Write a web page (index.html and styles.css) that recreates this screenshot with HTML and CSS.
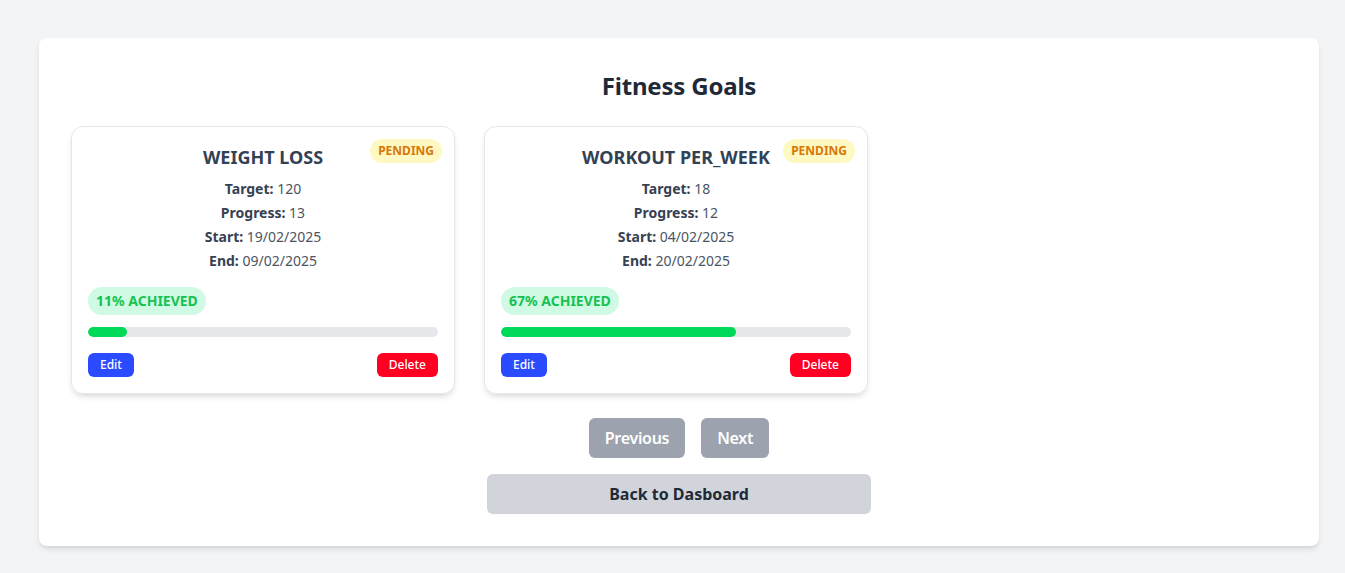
FILE: index.html
```html
<!DOCTYPE html>
<html lang="en">
<head>
<meta charset="utf-8">
<title>Fitness Goals</title>
<link rel="stylesheet" href="styles.css">
</head>
<body>
<main class="panel">
  <h1 class="page-title">Fitness Goals</h1>
  <div class="goal-grid">
    <div class="goal-card">
      <span class="status">PENDING</span>
      <h2 class="goal-title">WEIGHT LOSS</h2>
      <div class="details">
        <p><b>Target:</b> 120</p>
        <p><b>Progress:</b> 13</p>
        <p><b>Start:</b> 19/02/2025</p>
        <p><b>End:</b> 09/02/2025</p>
      </div>
      <span class="achieved">11% ACHIEVED</span>
      <div class="bar"><div class="bar-fill" style="width:11%"></div></div>
      <div class="actions">
        <button class="btn-edit">Edit</button>
        <button class="btn-delete">Delete</button>
      </div>
    </div>
    <div class="goal-card">
      <span class="status">PENDING</span>
      <h2 class="goal-title">WORKOUT PER_WEEK</h2>
      <div class="details">
        <p><b>Target:</b> 18</p>
        <p><b>Progress:</b> 12</p>
        <p><b>Start:</b> 04/02/2025</p>
        <p><b>End:</b> 20/02/2025</p>
      </div>
      <span class="achieved">67% ACHIEVED</span>
      <div class="bar"><div class="bar-fill" style="width:67%"></div></div>
      <div class="actions">
        <button class="btn-edit">Edit</button>
        <button class="btn-delete">Delete</button>
      </div>
    </div>
  </div>
  <div class="pager">
    <button class="btn-page">Previous</button>
    <button class="btn-page">Next</button>
  </div>
  <div class="back-row">
    <button class="btn-back">Back to Dasboard</button>
  </div>
</main>
</body>
</html>
```

FILE: styles.css
```css
* { box-sizing: border-box; }
html, body { margin: 0; padding: 0; }
body {
  background: #f3f4f6;
  font-family: "Noto Sans", "Open Sans", sans-serif;
  color: #374151;
  padding: 38px 26px 27px 39px;
}
.panel {
  background: #fff;
  border-radius: 8px;
  box-shadow: 0 4px 6px -1px rgba(0,0,0,0.1), 0 2px 4px -2px rgba(0,0,0,0.1);
  padding: 32px;
  height: 508px;
}
.page-title {
  margin: 0 0 24px;
  text-align: center;
  font-size: 24px;
  line-height: 32px;
  font-weight: 700;
  color: #1f2937;
  letter-spacing: -0.2px;
}
.goal-grid {
  display: grid;
  grid-template-columns: repeat(3, 384px);
  column-gap: 29px;
}
.goal-card {
  position: relative;
  border: 1px solid #e5e7eb;
  border-radius: 12px;
  box-shadow: 0 4px 6px -1px rgba(0,0,0,0.1), 0 2px 4px -2px rgba(0,0,0,0.1);
  padding: 16px;
  display: flex;
  flex-direction: column;
  align-items: flex-start;
}
.status {
  position: absolute;
  top: 12px;
  right: 12px;
  background: #fef9c3;
  color: #d97706;
  font-size: 12px;
  line-height: 16px;
  font-weight: 700;
  padding: 4px 8px;
  border-radius: 999px;
}
.goal-title {
  align-self: stretch;
  margin: 0 0 8px;
  text-align: center;
  font-size: 18px;
  line-height: 28px;
  font-weight: 700;
  color: #334155;
}
.details {
  align-self: stretch;
  text-align: center;
  font-size: 14px;
  color: #4b5563;
}
.details p { margin: 0 0 4px; line-height: 20px; }
.details b { color: #374151; font-weight: 700; }
.achieved {
  margin-top: 12px;
  background: #d1fae5;
  color: #16c251;
  font-size: 14px;
  line-height: 20px;
  font-weight: 700;
  padding: 4px 8px;
  border-radius: 999px;
}
.bar {
  align-self: stretch;
  margin-top: 12px;
  height: 10px;
  background: #e5e7eb;
  border-radius: 999px;
  overflow: hidden;
}
.bar-fill {
  height: 100%;
  background: #00d957;
  border-radius: 999px;
}
.actions {
  align-self: stretch;
  margin-top: 16px;
  display: flex;
  justify-content: space-between;
}
button {
  font-family: inherit;
  border: 0;
  cursor: pointer;
}
.btn-edit, .btn-delete {
  color: #fff;
  font-size: 12px;
  line-height: 16px;
  font-weight: 500;
  padding: 4px 12px;
  border-radius: 6px;
}
.btn-edit { background: #2a4bff; }
.btn-delete { background: #ff0022; }
.pager {
  margin-top: 24px;
  display: flex;
  justify-content: center;
  gap: 16px;
}
.btn-page {
  background: #9ca3af;
  color: #fff;
  font-size: 16px;
  line-height: 24px;
  font-weight: 600;
  letter-spacing: -0.3px;
  padding: 8px 16px;
  border-radius: 6px;
}
.back-row {
  margin-top: 16px;
  display: flex;
  justify-content: center;
}
.btn-back {
  width: 384px;
  background: #d1d5db;
  color: #1f2937;
  font-size: 16px;
  line-height: 24px;
  font-weight: 700;
  padding: 8px 16px;
  border-radius: 6px;
}
```
